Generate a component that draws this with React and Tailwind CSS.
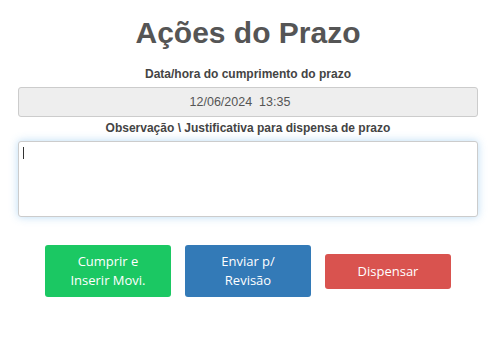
import React from "react";

function App() {
  return (
    <div className="w-[496px] h-[344px] bg-white px-[18px] font-['Liberation_Sans',Arial,sans-serif]">
      {/* TITLE */}
      <h1 className="mt-[16px] text-center text-[30px] leading-[34px] font-bold text-[#555]">
        Ações do Prazo
      </h1>

      {/* DATA/HORA */}
      <div className="mt-[16px] text-center text-[12px] leading-[17px] font-bold text-[#444]">
        Data/hora do cumprimento do prazo
      </div>
      <div className="mt-[4px] h-[30px] flex items-center justify-center pr-[16px] border border-[#ccc] rounded-[3px] bg-[#eee] text-[12.5px] text-[#555] whitespace-pre">
        12/06/2024  13:35
      </div>

      {/* OBSERVACAO */}
      <div className="mt-[3px] text-center text-[12px] leading-[17px] font-bold text-[#444]">
        Observação \ Justificativa para dispensa de prazo
      </div>
      <div className="mt-[4px] h-[76px] border border-[#ccc] rounded-[3px] bg-white shadow-[0_0_8px_rgba(102,175,233,0.45)] px-[4px] pt-[5px]">
        <span className="block w-px h-[12px] bg-[#333]"></span>
      </div>

      {/* BUTTONS */}
      <div className="mt-[28px] flex items-center justify-center gap-[14px] font-['Open_Sans',sans-serif] text-[13px] leading-[19px] text-white">
        <button className="w-[126px] h-[52px] rounded-[3px] bg-[#1bc863]">
          Cumprir e<br />Inserir Movi.
        </button>
        <button className="w-[126px] h-[52px] rounded-[3px] bg-[#337ab7]">
          Enviar p/<br />Revisão
        </button>
        <button className="w-[126px] h-[35px] rounded-[3px] bg-[#d9534f]">
          Dispensar
        </button>
      </div>
    </div>
  );
}

export default App;
